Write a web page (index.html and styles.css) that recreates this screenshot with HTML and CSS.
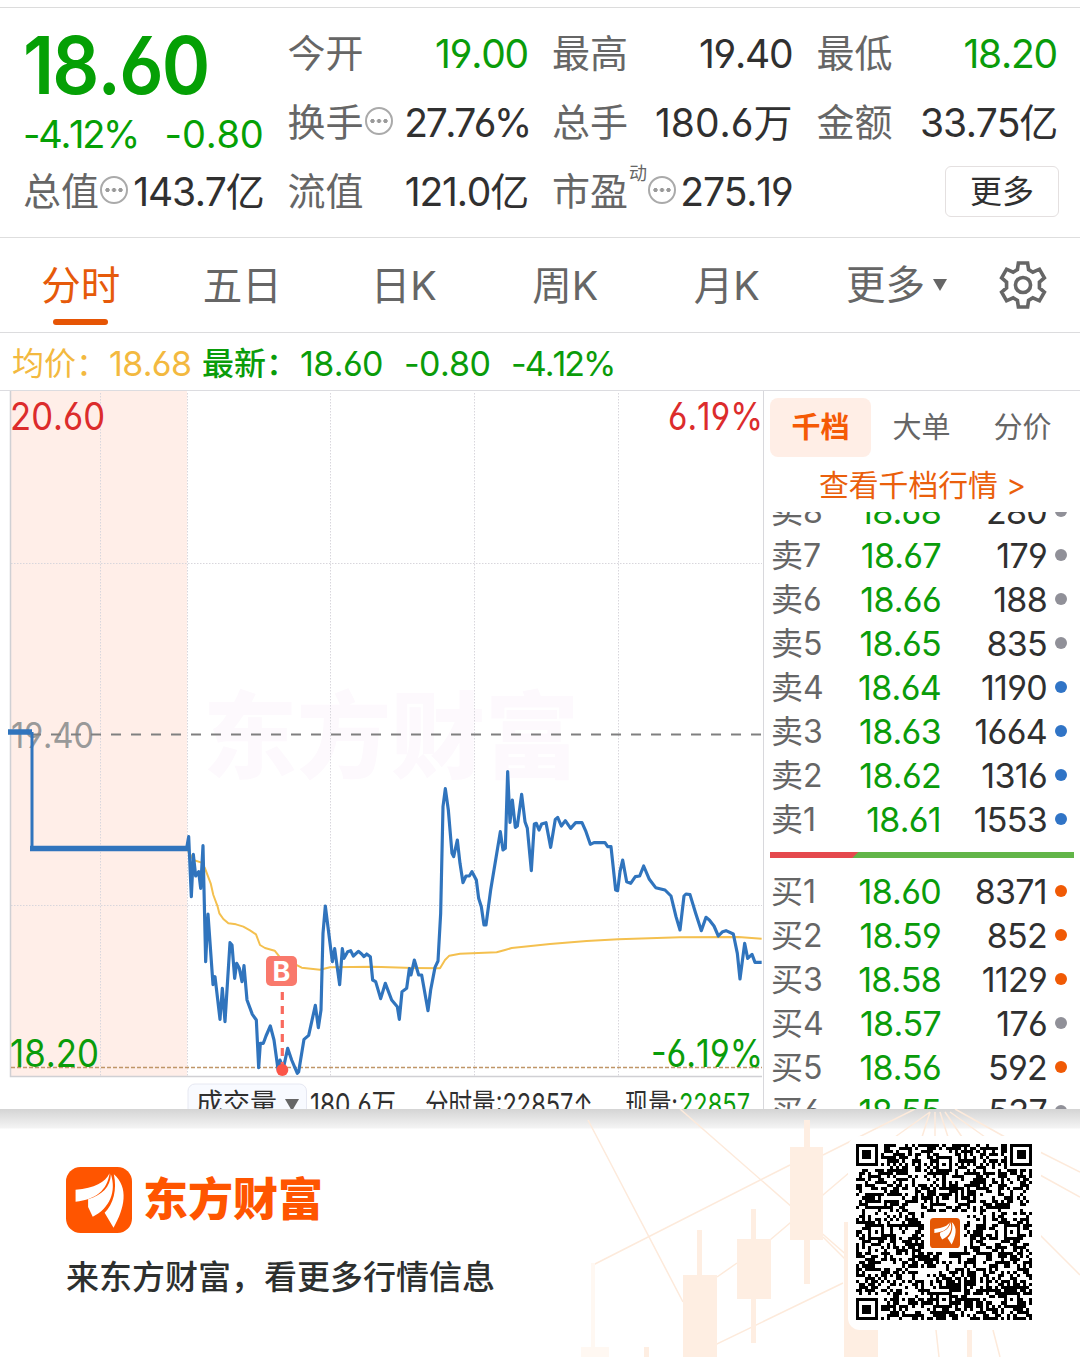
FILE: index.html
```html
<!DOCTYPE html>
<html lang="zh-CN">
<head>
  <meta charset="UTF-8">
  <meta name="viewport" content="width=device-width, initial-scale=1.0">
  <title>东方财富 - 分时</title>
  <link rel="stylesheet" href="styles.css">
</head>
<body>
  <header class="quote">
    <div class="quote-main">
      <div class="price">18.60</div>
      <div class="change"><span>-4.12%</span><span class="diff">-0.80</span></div>
    </div>
    <div class="stat"><span class="label">今开</span><span class="value down">19.00</span></div>
    <div class="stat"><span class="label">最高</span><span class="value">19.40</span></div>
    <div class="stat"><span class="label">最低</span><span class="value down">18.20</span></div>
    <div class="stat"><span class="label">换手</span><i class="tip"></i><span class="value tight">27.76%</span></div>
    <div class="stat"><span class="label">总手</span><span class="value wide">180.6万</span></div>
    <div class="stat"><span class="label">金额</span><span class="value">33.75亿</span></div>
    <div class="stat"><span class="label">总值</span><i class="tip"></i><span class="value">143.7亿</span></div>
    <div class="stat"><span class="label">流值</span><span class="value">121.0亿</span></div>
    <div class="stat"><span class="label">市盈</span><span class="sup">动</span><i class="tip"></i><span class="value">275.19</span></div>
    <div class="stat"><button class="more-btn">更多</button></div>
  </header>

  <nav class="tabs">
    <a class="tab active">分时</a>
    <a class="tab">五日</a>
    <a class="tab">日K</a>
    <a class="tab">周K</a>
    <a class="tab">月K</a>
    <a class="tab tab-more">更多<i class="caret"></i></a>
    <a class="tab">
      <svg class="gear" viewBox="25 30 146 150">
        <path d="M84 38H112L115 58L128 66L148 57L163 83L148 96V114L163 127L148 153L128 144L115 152L112 172H84L81 152L68 144L48 153L33 127L48 114V96L33 83L48 57L68 66L81 58Z"/>
        <circle cx="98" cy="105" r="23"/>
      </svg>
    </a>
  </nav>

  <div class="info">
    <span class="avg">均价：</span><span class="avg num n1">18.68</span>
    <span class="latest">最新：</span><span class="num n2">18.60</span>
    <span class="num n3">-0.80</span>
    <span class="num n4">-4.12%</span>
  </div>

  <main class="main">
    <svg class="chart" viewBox="0 391 763 718">
      <rect class="pre" x="11" y="391" width="176" height="685"/>
      <text class="watermark" x="203" y="771" textLength="376">东方财富</text>

      <!-- grid -->
      <path class="grid" d="M100.5 393V1076M187.5 393V1076M330.5 393V1076M474.5 393V1076M618.5 393V1076M11 563.5H762M11 905.5H762"/>
      <path class="axis" d="M10.5 391V1076.5H762"/>
      <text class="base" x="11" y="748" textLength="83" lengthAdjust="spacingAndGlyphs">19.40</text>
      <path class="base-line" d="M31 734.5H762"/>
      <path class="low-line" d="M11 1067.5H762"/>

      <!-- average and price -->
      <g transform="translate(180 680) scale(.33333)">
        <polyline class="avg-line" points="20,505 40,540 65,548 75,565 92,610 100,645 113,680 118,700 130,717 145,730 168,733 190,740 210,751 228,763 240,795 255,804 284,812 300,832 340,850 365,863 420,869 450,862 580,860 700,864 780,865 795,840 808,827 840,821 950,817 975,810 995,804 1110,792 1220,783 1315,778 1500,772 1675,771 1745,776"/>
        <polyline class="price-line" points="20,505 26,470 34,650 40,523 47,588 56,575 62,625 69,497 77,845 84,702 99,914 105,890 120,1018 127,925 135,1025 150,788 156,795 164,895 170,850 178,865 186,905 192,857 201,960 217,1003 229,1020 236,1163 241,1090 250,1090 258,1068 271,1038 282,1080 294,1168 300,1140 310,1165 323,1105 335,1140 352,1180 356,1175 372,1078 386,1066 406,976 415,1043 423,990 429,760 436,678 457,845 464,806 479,914 487,806 492,835 503,815 512,812 520,828 535,814 545,822 552,830 560,822 571,830 578,900 587,905 602,956 616,910 635,960 652,980 658,1018 666,935 680,925 688,866 693,885 703,840 716,885 725,885 744,992 752,930 765,862 774,843 782,700 789,380 796,326 805,390 816,520 821,530 832,480 840,550 849,608 858,588 868,588 876,575 889,600 896,655 904,680 912,735 918,735 932,630 961,455 969,510 976,505 983,275 990,427 997,360 1006,442 1012,438 1025,343 1035,425 1042,445 1054,572 1063,432 1069,430 1077,450 1085,432 1098,428 1112,502 1126,418 1133,412 1144,438 1156,422 1172,445 1187,428 1206,428 1218,455 1231,493 1242,488 1275,488 1283,500 1293,500 1307,630 1313,632 1320,575 1328,540 1340,605 1352,610 1366,590 1379,588 1391,558 1408,598 1427,623 1455,630 1473,648 1488,710 1500,750 1512,648 1518,642 1530,644 1547,700 1564,752 1578,712 1588,720 1602,738 1615,768 1628,755 1638,752 1660,762 1672,820 1680,897 1694,790 1703,835 1716,823 1725,847 1745,847"/>
      </g>
      <path class="pre-line" d="M8 732H32"/>
      <path class="pre-line" d="M30 848.5H188"/>
      <path class="pre-line thin" d="M32 732V848"/>

      <text class="up" x="10" y="430" textLength="95" lengthAdjust="spacingAndGlyphs">20.60</text>
      <text class="up" x="668" y="430" textLength="95" lengthAdjust="spacingAndGlyphs">6.19%</text>
      <text class="down" x="10" y="1066.5" textLength="89" lengthAdjust="spacingAndGlyphs">18.20</text>
      <text class="down" x="651" y="1066.5" textLength="112" lengthAdjust="spacingAndGlyphs">-6.19%</text>

      <!-- buy marker -->
      <path class="buy-line" d="M282.3 992V1066"/>
      <circle class="buy-dot" cx="282.3" cy="1070" r="6"/>
      <rect class="buy-box" x="266" y="956" width="31" height="30" rx="5"/>
      <text class="buy-text" x="281.5" y="981">B</text>

      <!-- volume strip -->
      <rect class="vol-box" x="188" y="1084" width="118.500" height="40" rx="7"/>
      <text class="vol cjk" x="196" y="1113" textLength="81">成交量</text>
      <path class="vol-caret" d="M285 1099H299L292 1111Z"/>
      <text class="vol" x="310" y="1115" textLength="86" lengthAdjust="spacingAndGlyphs">180.6万</text>
      <text class="vol" x="425" y="1115" textLength="168" lengthAdjust="spacingAndGlyphs">分时量:22857↑</text>
      <text class="vol" x="625" y="1115" textLength="53" lengthAdjust="spacingAndGlyphs">现量:</text>
      <text class="vol down" x="679" y="1115" textLength="71" lengthAdjust="spacingAndGlyphs">22857</text>
    </svg>

    <aside class="depth">
      <div class="depth-tabs">
        <a class="depth-tab active">千档</a>
        <a class="depth-tab">大单</a>
        <a class="depth-tab">分价</a>
      </div>
      <a class="depth-link">查看千档行情 <span>&gt;</span></a>
      <div class="book">
        <div class="sell">
          <div class="row"><span>卖8</span><b>18.68</b><em>280</em><i class="gray"></i></div>
          <div class="row"><span>卖7</span><b>18.67</b><em>179</em><i class="gray"></i></div>
          <div class="row"><span>卖6</span><b>18.66</b><em>188</em><i class="gray"></i></div>
          <div class="row"><span>卖5</span><b>18.65</b><em>835</em><i class="gray"></i></div>
          <div class="row"><span>卖4</span><b>18.64</b><em>1190</em><i class="blue"></i></div>
          <div class="row"><span>卖3</span><b>18.63</b><em>1664</em><i class="blue"></i></div>
          <div class="row"><span>卖2</span><b>18.62</b><em>1316</em><i class="blue"></i></div>
          <div class="row"><span>卖1</span><b>18.61</b><em>1553</em><i class="blue"></i></div>
        </div>
        <div class="ratio"></div>
        <div class="buy">
          <div class="row"><span>买1</span><b>18.60</b><em>8371</em><i class="orange"></i></div>
          <div class="row"><span>买2</span><b>18.59</b><em>852</em><i class="orange"></i></div>
          <div class="row"><span>买3</span><b>18.58</b><em>1129</em><i class="orange"></i></div>
          <div class="row"><span>买4</span><b>18.57</b><em>176</em><i class="gray"></i></div>
          <div class="row"><span>买5</span><b>18.56</b><em>592</em><i class="orange"></i></div>
          <div class="row"><span>买6</span><b>18.55</b><em>537</em><i class="gray"></i></div>
        </div>
      </div>
    </aside>
  </main>

  <footer class="footer">
    <svg class="footer-bg" viewBox="540 1109 540 248">
      <g class="rays">
        <path d="M680 1109L850 1258M593 1265L790 1165M823 1155L915 1109M588 1120L683 1302M717 1277L737 1263M770 1240L850 1172M690 1357L843 1283M823 1237L848 1262"/>
        <path d="M930 1112L895 1137M930 1112L922 1137M935 1112L935 1137M940 1112L948 1137M945 1112L962 1137M950 1112L985 1137M955 1109L1005 1137M1040 1152L1080 1172M1040 1175L1080 1197M1040 1235L1080 1275M936 1330L939 1357M993 1330L1000 1357"/>
      </g>
      <g class="candles">
        <path d="M790 1147H823V1240H790ZM804 1120H810V1147H804ZM804 1240H810V1284H804Z"/>
        <path d="M737 1239H771V1299H737ZM751 1209H756V1239H751ZM751 1299H756V1343H751Z"/>
        <path d="M683 1275H717V1357H683ZM697 1230H702V1275H697Z"/>
        <path d="M844 1222H878V1357H844ZM967 1330H972V1357H967ZM644 1347H649V1357H644Z"/>
        <path class="faint" d="M581 1347H609V1357H581ZM591 1263H595V1347H591Z"/>
      </g>
    </svg>
    <div class="brand">
      <div class="brand-name">
        <svg class="logo" viewBox="17 20 200 200">
          <rect x="17" y="20" width="200" height="200" rx="44"/>
          <path d="M149 39C136 66 104 85 46 89V125C108 119 142 90 149 39Z"/>
          <path d="M153 42C151 82 127 104 84 118V141L98 171C150 145 170 94 153 42Z"/>
          <path d="M162 42C172 88 161 132 134 159L161 204C195 145 208 82 162 42Z"/>
        </svg>
        <span>东方财富</span>
      </div>
      <p class="slogan">来东方财富，看更多行情信息</p>
    </div>
    <div class="qr">
      <svg class="qr-code" id="qr" viewBox="0 0 57 57"></svg>
      <svg class="qr-logo" viewBox="17 20 200 200">
        <rect x="17" y="20" width="200" height="200" rx="24"/>
        <path d="M149 49C136 71 104 89 46 93V120C108 116 142 90 149 49Z"/>
        <path d="M153 47C151 82 127 104 84 118V136L98 164C150 140 170 94 153 47Z"/>
        <path d="M162 47C172 88 161 132 134 154L161 196C190 145 203 82 162 47Z"/>
      </svg>
    </div>
  </footer>

  <script>
    // version 10 code: 57 x 57 modules
    const N = 57;
    const finders = [[0, 0], [N - 7, 0], [0, N - 7]];
    const aligns = [[28, 6], [6, 28], [50, 28], [28, 50], [50, 50]];
    let seed = 20857;

    function rand() {
      seed = (seed * 1103515245 + 12345) % 2147483648;
      return seed / 2147483648;
    }

    function moduleAt(x, y) {
      const fill = rand() < 0.5;
      for (const [fx, fy] of finders) {
        const d = Math.max(Math.abs(x - fx - 3), Math.abs(y - fy - 3));
        if (d <= 4) return d === 3 || d <= 1;
      }
      for (const [ax, ay] of aligns) {
        const d = Math.max(Math.abs(x - ax), Math.abs(y - ay));
        if (d <= 2) return d !== 1;
      }
      if (x === 6 || y === 6) return (x + y) % 2 === 0;
      if (Math.abs(x - 28) <= 6 && Math.abs(y - 28) <= 6) return false;
      return fill;
    }

    let d = "";
    for (let y = 0; y < N; y++) {
      for (let x = 0; x < N; x++) {
        if (moduleAt(x, y)) d += `M${x} ${y}h1v1h-1z`;
      }
    }
    document.getElementById("qr").innerHTML = `<path d="${d}"/>`;
  </script>
</body>
</html>
```
FILE: styles.css
```css
* {
  box-sizing: border-box;
}

body {
  margin: 0;
  width: 1080px;
  height: 1357px;
  overflow: hidden;
  background: #fff;
  color: #303030;
  font-family: Inter, "Noto Sans CJK SC", sans-serif;
  font-feature-settings: "cv03", "cv04";
  font-kerning: none;
  padding-top: 7px;
}

.down {
  color: #0a9c0a;
}

/* quote header */
.quote {
  height: 231px;
  padding: 12px 23px 0;
  border-top: 1px solid #dcdcdc;
  border-bottom: 1px solid #dedede;
  display: grid;
  grid-template-columns: repeat(4, 240.5px);
  grid-template-rows: repeat(3, 69px);
  column-gap: 24px;
}

.quote-main {
  grid-row: span 2;
  color: #05a005;
}

.price {
  height: 91px;
  line-height: 90px;
  font-size: 80px;
  font-weight: 600;
  letter-spacing: -2px;
  transform: scaleX(0.92);
  transform-origin: left;
}

.change {
  height: 45px;
  line-height: 47px;
  font-size: 38px;
  letter-spacing: -2.3px;
  display: flex;
  justify-content: space-between;
}

.diff {
  letter-spacing: -0.2px;
}

.stat {
  display: flex;
  align-items: center;
  height: 69px;
  font-size: 39px;
  line-height: 40px;
  white-space: nowrap;
}

.label {
  font-size: 38px;
  color: #666;
  margin-top: -3px;
}

.value {
  margin-left: auto;
  margin-top: -1px;
  letter-spacing: -1.2px;
}

.value.tight {
  letter-spacing: -2.4px;
  margin-right: -2px;
}

.value.wide {
  letter-spacing: 0;
}

.sup {
  font-size: 18px;
  color: #666;
  margin: -38px 0 0 1px;
}

.tip {
  flex: none;
  width: 28px;
  height: 28px;
  margin: -5px 0 0 1px;
  border: 2px solid #aaa;
  border-radius: 50%;
  background: radial-gradient(circle, #999 1.8px, transparent 2.4px) center / 6.5px 24px repeat-x content-box;
  padding: 0 2px;
}

.more-btn {
  margin: -3px -2px 0 auto;
  width: 114px;
  height: 51px;
  padding: 0;
  background: #fff;
  border: 1px solid #e4e0e0;
  border-radius: 6px;
  color: #303030;
  font: inherit;
  font-size: 32px;
  line-height: 49px;
}

/* period tabs */
.tabs {
  height: 95px;
  border-bottom: 1px solid #dcdcde;
  display: grid;
  grid-template-columns: repeat(5, 161.5px) 178px 74px;
}

.tab {
  display: flex;
  flex-direction: column;
  align-items: center;
  font-size: 39.5px;
  line-height: 96px;
  height: 94px;
  color: #666;
}

.tab.active {
  color: #e65a0a;
}

.tab.active::after {
  content: "";
  width: 55px;
  height: 6px;
  margin-top: -15px;
  border-radius: 3px;
  background: #e65505;
}

.tab-more {
  flex-direction: row;
  justify-content: center;
}

.caret {
  margin-left: 8px;
  border: 7px solid transparent;
  border-top: 12px solid #666;
  border-bottom: 0;
}

.gear {
  width: 48px;
  height: 50px;
  margin-top: 22px;
  fill: none;
  stroke: #666;
  stroke-width: 11;
}

/* price summary */
.info {
  height: 58px;
  padding-left: 12px;
  border-bottom: 1px solid #dcdce0;
  display: flex;
  line-height: 61px;
  font-size: 32px;
  color: #0a9c0a;
  white-space: nowrap;
}

.avg {
  color: #f3b93f;
}

.latest {
  font-weight: 500;
}

.num {
  font-size: 34px;
  letter-spacing: -0.6px;
}

.n1 {
  width: 94px;
  padding-left: 1px;
}

.n2 {
  width: 106px;
  padding-left: 2px;
}

.n3 {
  width: 107px;
}

.n4 {
  letter-spacing: -2px;
}

/* chart and order book */
.main {
  display: flex;
  height: 718px;
  overflow: hidden;
}

.chart {
  flex: none;
  width: 763px;
  height: 718px;
  font-size: 38px;
}

.pre {
  fill: #ffeee8;
}

.watermark {
  font-size: 94px;
  font-weight: 900;
  fill: #fdf9fd;
}

.grid {
  stroke: #d8d6dc;
  stroke-dasharray: 1.5 1.5;
  fill: none;
}

.axis {
  fill: none;
  stroke: #d0d0d4;
  stroke-width: 1.5;
}

.base {
  font-size: 35px;
  fill: #999;
}

.base-line {
  stroke: #808080;
  stroke-width: 2;
  stroke-dasharray: 10 10;
}

.low-line {
  stroke: #c09668;
  stroke-width: 1.4;
  stroke-dasharray: 4 2;
}

.avg-line {
  fill: none;
  stroke: #f4c04f;
  stroke-width: 6;
  stroke-linejoin: round;
}

.price-line {
  fill: none;
  stroke: #3074bd;
  stroke-width: 9.5;
  stroke-linejoin: round;
}

.pre-line {
  stroke: #3074bd;
  stroke-width: 5.5;
}

.pre-line.thin {
  stroke-width: 3;
}

.up {
  fill: #dc2c2c;
}

.chart .down {
  fill: #0a9c0a;
}

.buy-line {
  stroke: #f96a5e;
  stroke-width: 3.2;
  stroke-dasharray: 8 6;
}

.buy-dot {
  fill: #fb5548;
}

.buy-box {
  fill: #f9796c;
}

.buy-text {
  font-size: 27px;
  font-weight: 700;
  fill: #fff;
  text-anchor: middle;
}

.vol-box {
  fill: #f8faff;
  stroke: #e6e8f2;
}

.vol {
  font-size: 30px;
  fill: #303030;
}

.vol.cjk {
  font-size: 27px;
}

.vol-caret {
  fill: #666;
}

.depth {
  flex: none;
  width: 317px;
  border-left: 1px solid #d8d8dc;
  padding: 7px 6px 0;
}

.depth-tabs {
  display: flex;
}

.depth-tab {
  width: 101px;
  height: 59px;
  line-height: 59px;
  border-radius: 8px;
  text-align: center;
  font-size: 29px;
  color: #666;
}

.depth-tab.active {
  background: #ffeee6;
  color: #f55a05;
  font-weight: 700;
}

.depth-link {
  display: block;
  height: 55px;
  line-height: 57px;
  padding-left: 49px;
  font-size: 29.8px;
  color: #ea5f0c;
  white-space: nowrap;
}

.book {
  height: 597px;
  overflow: hidden;
}

.sell {
  margin-top: -22px;
}

.row {
  display: grid;
  grid-template-columns: 60px 111px 106px 1fr;
  align-items: center;
  height: 44px;
  font-size: 34px;
  line-height: 44px;
  letter-spacing: -0.7px;
}

.row span {
  font-size: 32px;
  letter-spacing: 0;
  padding-left: 1px;
  color: #666;
}

.row b {
  font-weight: 400;
  color: #0a9c0a;
  text-align: right;
}

.row em {
  font-style: normal;
  text-align: right;
}

.row i {
  width: 12px;
  height: 12px;
  margin: -3px 0 0 8px;
  border-radius: 50%;
}

.gray {
  background: #909098;
}

.blue {
  background: #3074c6;
}

.orange {
  background: #f05a05;
}

.ratio {
  height: 6px;
  margin: 10px 0 12px;
  background: linear-gradient(135deg, #e5484d 62px, #62b548 63px);
  width: 304px;
}

/* share footer */
.footer {
  position: relative;
  height: 248px;
  padding: 27px 39px 0 66px;
  display: flex;
  justify-content: space-between;
  background: linear-gradient(#d4d4d4, #f4f4f4 19px, #fff 20px);
}

.footer-bg {
  position: absolute;
  right: 0;
  top: 0;
  width: 540px;
  height: 248px;
}

.rays {
  fill: none;
  stroke: #fdeadb;
  stroke-width: 1.5;
}

.candles {
  fill: #feeee2;
}

.faint {
  fill: #fff8f2;
}

.brand-name {
  display: flex;
  align-items: center;
  gap: 11px;
  margin-top: 31px;
  font-size: 45px;
  font-weight: 900;
  line-height: 66px;
  color: #ff5500;
}

.brand-name span {
  height: 66px;
}

.logo {
  width: 66px;
  height: 66px;
}

.logo rect {
  fill: #ff5500;
}

.logo path,
.qr-logo path {
  fill: #fff;
}

.slogan {
  margin: 19px 0 0;
  font-size: 33px;
  font-weight: 500;
  line-height: 50px;
  color: #2d302f;
}

.qr {
  position: relative;
  width: 193px;
  height: 194px;
  padding: 8px;
  border-radius: 12px;
  background: #fff;
}

.qr-code {
  display: block;
  width: 176px;
  height: 176px;
  shape-rendering: crispEdges;
}

.qr-logo {
  position: absolute;
  left: 82px;
  top: 82px;
  width: 30px;
  height: 30px;
}

.qr-logo rect {
  fill: #e45805;
}
```
